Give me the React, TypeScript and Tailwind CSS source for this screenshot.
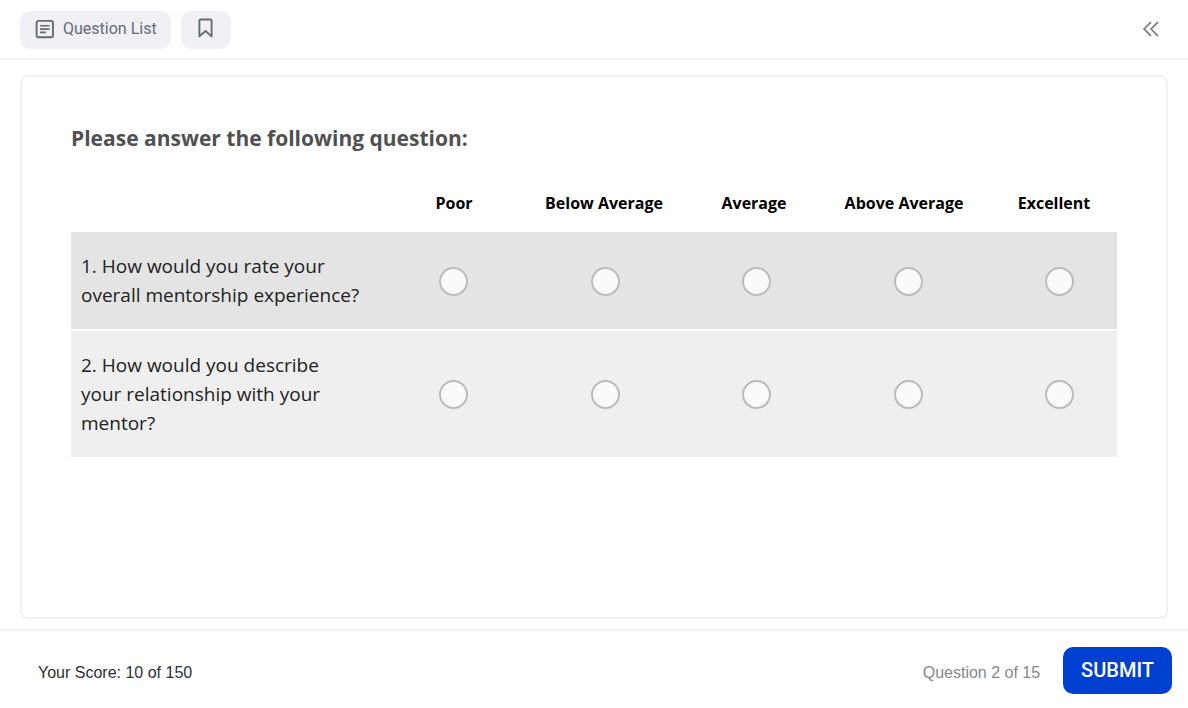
import React, { useState } from "react";
import { type ReactNode } from "react";

type QuestionType = {
  id: number;
  text: string;
};

const ratings = [
  "Poor",
  "Below Average",
  "Average",
  "Above Average",
  "Excellent",
];

const questions: QuestionType[] = [
  { id: 1, text: "How would you rate your overall mentorship experience?" },
  {
    id: 2,
    text: "How would you describe your relationship with your mentor?",
  },
];

const Icon = ({
  className,
  viewBox,
  children,
}: {
  className: string;
  viewBox: string;
  children: ReactNode;
}) => (
  <svg
    className={className}
    viewBox={viewBox}
    fill="none"
    stroke="currentColor"
    aria-hidden="true"
  >
    {children}
  </svg>
);

const Header = () => {
  return (
    <header className="flex items-center justify-between border-b-2 border-[#f2f2f3] pt-[11px] pb-[9px] pl-5 pr-7">
      <div className="flex gap-[10px]">
        <button
          type="button"
          className="flex h-[38px] items-center gap-2 rounded-[10px] bg-[#f1f0f5] pb-[2px] pl-[15px] pr-[14px] font-['Roboto',sans-serif] text-base text-[#646c74]"
        >
          <Icon className="h-5 w-5" viewBox="0 0 20 20">
            <rect x="1.6" y="1.9" width="16.4" height="16.4" rx="2" strokeWidth="1.9" />
            <path d="M5 6.8h9.6M5 10.1h9.6M5 13.4h6" strokeWidth="1.6" />
          </Icon>
          Question List
        </button>
        <button
          type="button"
          aria-label="Bookmark"
          className="flex h-[38px] w-[50px] items-center justify-center rounded-[10px] bg-[#f1f0f5] pb-1 text-[#646c74]"
        >
          <Icon className="h-5 w-4" viewBox="0 0 16 20">
            <path
              d="M1.4 18.4V2.6Q1.4 1.5 2.5 1.5H12.5Q13.6 1.5 13.6 2.6V18.4L7.5 13Z"
              strokeWidth="1.9"
              strokeLinejoin="round"
            />
          </Icon>
        </button>
      </div>
      <button
        type="button"
        aria-label="Collapse"
        className="pb-[2px] text-[#84888d]"
      >
        <Icon className="h-[18px] w-[18px]" viewBox="0 0 18 18">
          <path d="M9 2L2 9l7 7M16 2L9 9l7 7" strokeWidth="1.8" />
        </Icon>
      </button>
    </header>
  );
};

const RatingTable = () => {
  const [answers, setAnswers] = useState<Record<number, string>>({});

  return (
    <table className="mt-[37px] block w-full">
      <thead className="block">
        <tr className="-mr-3 grid grid-cols-[308px_repeat(5,1fr)] pb-[17px] text-base leading-6 font-bold text-black">
          <td></td>
          {ratings.map((rating) => (
            <th key={rating} scope="col" className="text-center">
              {rating}
            </th>
          ))}
        </tr>
      </thead>
      <tbody className="grid gap-[2px]">
        {questions.map((question) => (
          <tr
            key={question.id}
            className="grid grid-cols-[368px_1fr_1fr_1fr_1fr_72px] items-center bg-[#efefef] pt-5 pb-[19px] odd:bg-[#e4e4e4]"
          >
            <th
              scope="row"
              className="w-[300px] px-[10px] text-left text-[19px] leading-[29px] font-normal text-[#222]"
            >
              {`${question.id}. ${question.text}`}
            </th>
            {ratings.map((rating) => (
              <td key={rating} className="flex">
                <input
                  type="radio"
                  name={`question-${question.id}`}
                  aria-label={rating}
                  checked={answers[question.id] === rating}
                  onChange={() =>
                    setAnswers({ ...answers, [question.id]: rating })
                  }
                  className="h-[29px] w-[29px] appearance-none rounded-full border-2 border-[#bbb] bg-[#fafafa] checked:bg-[#0040d0]"
                />
              </td>
            ))}
          </tr>
        ))}
      </tbody>
    </table>
  );
};

const Footer = () => {
  return (
    <footer className="flex items-center justify-between border-t-2 border-[#f4f4f5] pt-4 pb-[14px] pl-[38px] pr-4 font-['Liberation_Sans',sans-serif] text-base">
      <p className="pt-1 text-[#2c2f36]">Your Score: 10 of 150</p>
      <div className="flex items-center gap-[23px]">
        <p className="pt-1 text-[#84888d]">Question 2 of 15</p>
        <button
          type="submit"
          className="h-[47px] rounded-[10px] bg-[#0040d0] px-[18px] pb-[2px] font-['Roboto',sans-serif] text-xl font-medium text-white"
        >
          SUBMIT
        </button>
      </div>
    </footer>
  );
};

const App = () => {
  const handleSubmit = (e: React.FormEvent<HTMLFormElement>) => {
    e.preventDefault();
  };

  return (
    <form
      onSubmit={handleSubmit}
      className="flex min-h-screen flex-col bg-white font-['Open_Sans',sans-serif]"
    >
      <Header />
      <main className="flex flex-1 flex-col px-5 pt-[15px] pb-[10px]">
        <section className="flex-1 rounded-lg border-2 border-[#f0f0f0] px-[49px] pt-[45px] pb-12">
          <h1 className="text-[21px] leading-8 font-bold text-[#505050]">
            Please answer the following question:
          </h1>
          <RatingTable />
        </section>
      </main>
      <Footer />
    </form>
  );
};

export default App;
